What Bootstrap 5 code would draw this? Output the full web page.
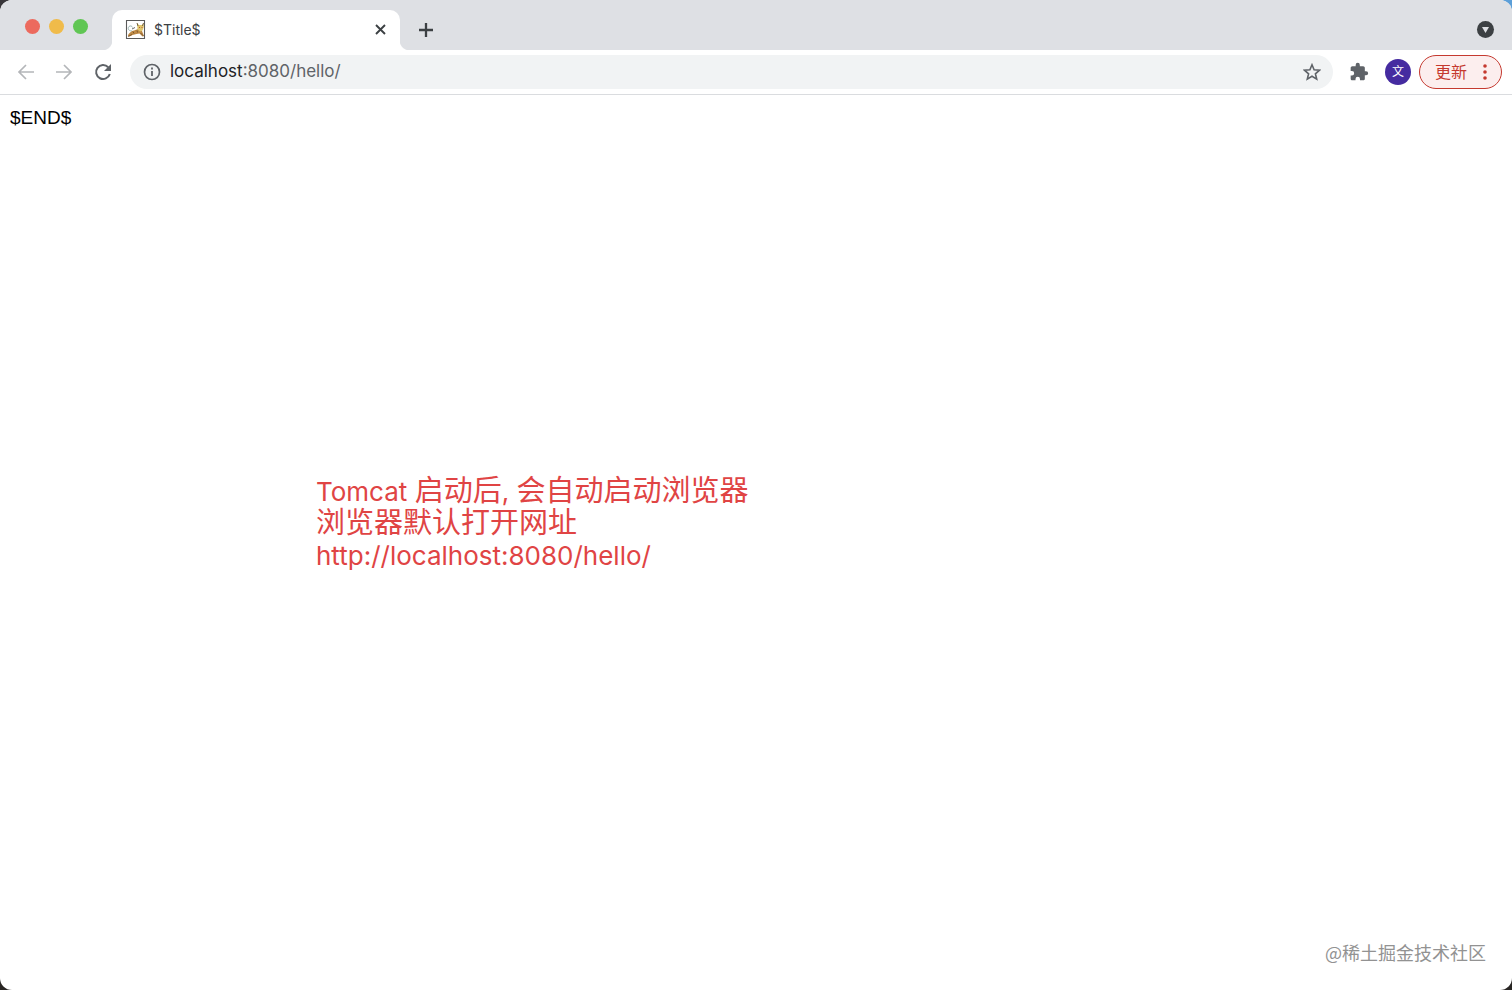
<!DOCTYPE html>
<html lang="zh-CN">
<head>
<meta charset="utf-8">
<meta name="viewport" content="width=device-width, initial-scale=1">
<title>$Title$</title>
<link href="https://cdn.jsdelivr.net/npm/bootstrap@5.3.0/dist/css/bootstrap.min.css" rel="stylesheet">
<style>
  body { font-family: Inter, "Noto Sans CJK SC", sans-serif; background: linear-gradient(90deg, #38363a 50%, #5c9fd8 50%) top / 100% 50% no-repeat #292624; }
  .window { background: #fff; border-radius: 12px; }
  .tab-strip { height: 50px; background: #dee0e4; }
  .lights { width: 112px; padding: 19px 0 0 25px; gap: 9px; }
  .light { width: 15px; height: 15px; }
  .light-close { background: #ec6a5e; }
  .light-min { background: #f0bb4a; }
  .light-max { background: #60c654; }
  .page-tab { width: 288px; height: 40px; padding: 0 12px 1px 13px; border-radius: 10px 10px 0 0; background: #fff; font-size: 14px; color: #3c4043; }
  .page-tab::before, .page-tab::after { content: ""; position: absolute; bottom: 0; width: 10px; height: 10px; }
  .page-tab::before { left: -10px; background: radial-gradient(circle at 0 0, transparent 10px, #fff 11px); }
  .page-tab::after { right: -10px; background: radial-gradient(circle at 100% 0, transparent 10px, #fff 11px); }
  .tool { display: flex; flex: none; padding: 0; border: 0; background: none; color: #5f6368; }
  .tool:disabled { color: #b4b6b9; }
  .dark { color: #3c4043; }
  .toolbar { height: 45px; padding: 0 10px 0 17px; border-bottom: 1px solid #dadcdf; }
  .nav-tools { gap: 20px; }
  .address { height: 34px; margin-left: 17px; padding: 0 12px; background: #f1f3f4; font-size: 17px; color: #202124; }
  .address input { border: 0; padding: 0; outline: 0; background: none; color: #5f6368; min-width: 0; }
  .avatar { width: 26px; height: 26px; background: #452ba0; color: #fff; font-size: 12px; }
  .update { width: 83px; height: 34px; padding: 0 10px 0 15px; border: 1px solid #c5392f; background: #fceeee; color: #c5392f; font-size: 16px; }
  .page-text { padding: 11px 10px 0; font: 19px/24px "Liberation Sans", sans-serif; color: #000; }
  .note { margin: 345px 0 0 316px; font-size: 29px; line-height: 32px; color: #e04444; font-weight: 400; }
  .note span { font-size: 26px; line-height: 1; }
  .watermark { right: 26px; bottom: 25px; font-size: 18px; line-height: 26px; color: #929292; font-family: "Noto Sans CJK SC", sans-serif; }
</style>
</head>
<body>
<div class="window vh-100 d-flex flex-column position-relative overflow-hidden">
  <header>
    <div class="tab-strip d-flex align-items-end">
      <div class="lights d-flex align-self-start">
        <span class="light light-close rounded-circle"></span>
        <span class="light light-min rounded-circle"></span>
        <span class="light light-max rounded-circle"></span>
      </div>
      <div class="page-tab d-flex align-items-center position-relative">
        <svg class="me-2 flex-shrink-0" width="21" height="21" viewBox="0 0 21 21" aria-hidden="true">
          <path d="M1.500 1.500h18v18h-18z" fill="#fff" stroke="#5a5a5a" stroke-width="1.100"/>
          <path d="M7 12C3 12 2.500 9 4 7.500c1.500-1.200 3-.5 3.500 1" fill="none" stroke="#9db5b2" stroke-width="1"/>
          <path d="M3 17c0-2 3-5 6-5.500l4-1.500 4 2 2 5-1.500.5-3-3-3 .5-4 1-3 1.500z" fill="#bf8a45"/>
          <path d="M12 4l2 2h3l1.500-2 .3 4-1.300 3.500-2.500 1-2.500-2z" fill="#dfc66e"/>
          <path d="M12 4l1 3m5.500-3-1 3" stroke="#55442e" stroke-width=".8"/>
          <path d="M14 8.500h1m1.500 0h1" stroke="#b65a36"/>
          <path d="M3 17.500l4-2m1-3 1 2m3-3 .5 2m3 .5 3 3" fill="none" stroke="#6b4a28" stroke-width=".8"/>
          <path d="M7 10l3-1.500" stroke="#3f3f3f" stroke-width=".8"/>
        </svg>
        <span class="flex-grow-1">$Title$</span>
        <button class="tool dark" aria-label="关闭标签页"><svg width="15" height="15" viewBox="0 0 15 15"><path d="M3 3l9 9M12 3l-9 9" stroke="currentColor" stroke-width="1.9"/></svg></button>
      </div>
      <button class="tool dark ms-3 mb-2 pb-1" aria-label="新建标签页"><svg width="20" height="16" viewBox="0 0 20 16"><path d="M10 1v14M3 8h14" stroke="currentColor" stroke-width="2.300"/></svg></button>
      <button class="tool dark ms-auto me-3 mb-2 pb-1" aria-label="搜索标签页"><svg width="21" height="17" viewBox="0 0 21 17"><circle cx="10.500" cy="8.500" r="8.500" fill="currentColor"/><path d="M7 6h7l-3.500 6z" fill="#dee0e4"/></svg></button>
    </div>
    <div class="toolbar d-flex align-items-center">
      <div class="nav-tools d-flex align-items-center">
        <button class="tool" disabled aria-label="后退"><svg width="18" height="18" viewBox="0 0 18 18"><path d="M17 9H2m7-7L2 9l7 7" fill="none" stroke="currentColor" stroke-width="1.700"/></svg></button>
        <button class="tool" disabled aria-label="前进"><svg width="18" height="18" viewBox="0 0 18 18"><path d="M1 9h14M9 2l7 7-7 7" fill="none" stroke="currentColor" stroke-width="1.700"/></svg></button>
        <button class="tool" aria-label="重新加载"><svg width="20" height="20" viewBox="0 0 20 20"><path d="M15.200 5.200A7 7 0 1 0 16.800 12" fill="none" stroke="currentColor" stroke-width="2"/><path fill="currentColor" d="M18 2v7h-7z"/></svg></button>
      </div>
      <div class="address rounded-pill flex-grow-1 d-flex align-items-center">
        <svg class="me-2" width="20" height="20" viewBox="0 0 20 20" aria-hidden="true"><circle cx="10" cy="10" r="7.500" fill="none" stroke="#5f6368" stroke-width="1.700"/><path d="M10 9v5M10 5.500v2" stroke="#5f6368" stroke-width="1.800"/></svg>
        <label for="url">localhost</label>
        <input id="url" class="flex-grow-1" type="text" value=":8080/hello/">
        <button class="tool" aria-label="添加书签"><svg width="18" height="18" viewBox="0 0 18 18"><path d="M9 1.800l2.100 5 5.400.4-4.100 3.600 1.300 5.300L9 13.300l-4.700 2.800 1.300-5.300-4.100-3.600 5.400-.4z" fill="none" stroke="currentColor" stroke-width="1.600"/></svg></button>
      </div>
      <button class="tool ms-3" aria-label="扩展程序"><svg width="20" height="20" viewBox="0 0 24 24"><path fill="currentColor" d="M20.500 11H19V7c0-1.100-.9-2-2-2h-4V3.500a2.500 2.500 0 0 0-5 0V5H4c-1.100 0-2 .9-2 2v3.800h1.500a2.700 2.700 0 0 1 0 5.400H2V20c0 1.100.9 2 2 2h3.800v-1.500a2.700 2.700 0 0 1 5.400 0V22H17c1.100 0 2-.9 2-2v-4h1.500a2.500 2.500 0 0 0 0-5z"/></svg></button>
      <button class="tool avatar rounded-circle ms-3 align-items-center justify-content-center">文</button>
      <button class="update rounded-pill ms-2 d-flex align-items-center justify-content-between">更新
        <svg width="12" height="18" viewBox="0 0 12 18" fill="currentColor" aria-hidden="true"><circle cx="6" cy="3" r="1.800"/><circle cx="6" cy="9" r="1.800"/><circle cx="6" cy="15" r="1.800"/></svg>
      </button>
    </div>
  </header>
  <main class="flex-grow-1">
    <p class="page-text mb-0">$END$</p>
    <p class="note"><span>Tomcat </span>启动后<span>, </span>会自动启动浏览器<br>浏览器默认打开网址<br><span>http://localhost:8080/hello/</span></p>
  </main>
  <div class="watermark position-absolute">@稀土掘金技术社区</div>
</div>
<script src="https://cdn.jsdelivr.net/npm/bootstrap@5.3.0/dist/js/bootstrap.bundle.min.js"></script>
</body>
</html>
